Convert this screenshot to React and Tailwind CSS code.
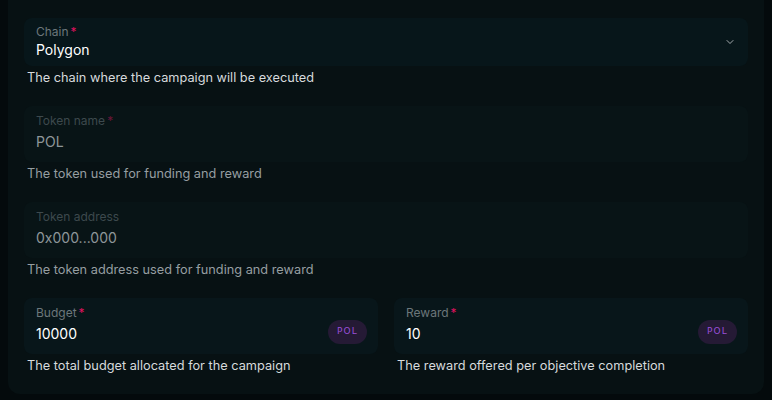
import { ChevronDown } from 'lucide-react';

const Label = ({ text, required, disabled }) => (
    <div className={`text-[12px] leading-4 ${disabled ? 'text-[#3d494d]' : 'text-[#6c777b]'}`}>
        {text}
        {required && <span className={`ml-0.5 ${disabled ? 'text-[#6b1538]' : 'text-[#e0115f]'}`}>*</span>}
    </div>
);

const Helper = ({ children, disabled }) => (
    <p className={`mt-0.5 pl-[3px] text-[12.75px] leading-5 ${disabled ? 'text-[#969ea1]' : 'text-[#d6dadc]'}`}>{children}</p>
);

const Badge = () => (
    <span className="mt-[15px] flex h-6 w-[39px] items-center justify-center rounded-full bg-[#251a35] text-[9px] font-medium tracking-[1.2px] text-[#9a4fd8] [font-family:'DejaVu_Sans',sans-serif]">
        POL
    </span>
);

const DisabledField = ({ label, required, value, helper }) => (
    <div>
        <div className="flex h-14 flex-col rounded-lg bg-[#081416] px-3 pt-[7px]">
            <Label text={label} required={required} disabled />
            <div className="mt-[3px] text-[14px] leading-5 text-[#8e9699]">{value}</div>
        </div>
        <Helper disabled>{helper}</Helper>
    </div>
);

const AmountField = ({ label, value, helper }) => (
    <div>
        <div className="flex h-14 items-start justify-between rounded-lg bg-[#08161a] pt-[7px] pl-3 pr-[11px]">
            <div className="flex flex-col">
                <Label text={label} required />
                <div className="mt-[3px] text-[14px] leading-5 text-white">{value}</div>
            </div>
            <Badge />
        </div>
        <Helper>{helper}</Helper>
    </div>
);

const App = () => {
    return (
        <div className="min-h-[400px] bg-[#040a0c] [font-family:Inter,'Noto_Sans',sans-serif]">
            <div className="mx-2 flex flex-col gap-[18px] rounded-b-xl bg-[#071113] px-4 pt-[18px] pb-[18px]">
                <div>
                    <div className="flex h-12 items-center justify-between rounded-lg bg-[#07161a] pl-3 pr-3">
                        <div className="flex flex-col">
                            <Label text="Chain" required />
                            <div className="text-[14px] leading-5 text-white">Polygon</div>
                        </div>
                        <ChevronDown size={12} strokeWidth={1.5} className="text-[#d6dadc]" />
                    </div>
                    <Helper>The chain where the campaign will be executed</Helper>
                </div>

                <DisabledField
                    label="Token name"
                    required
                    value="POL"
                    helper="The token used for funding and reward"
                />

                <DisabledField
                    label="Token address"
                    value="0x000...000"
                    helper="The token address used for funding and reward"
                />

                <div className="grid grid-cols-2 gap-4">
                    <AmountField label="Budget" value="10000" helper="The total budget allocated for the campaign" />
                    <AmountField label="Reward" value="10" helper="The reward offered per objective completion" />
                </div>
            </div>
        </div>
    );
};

export default App;
